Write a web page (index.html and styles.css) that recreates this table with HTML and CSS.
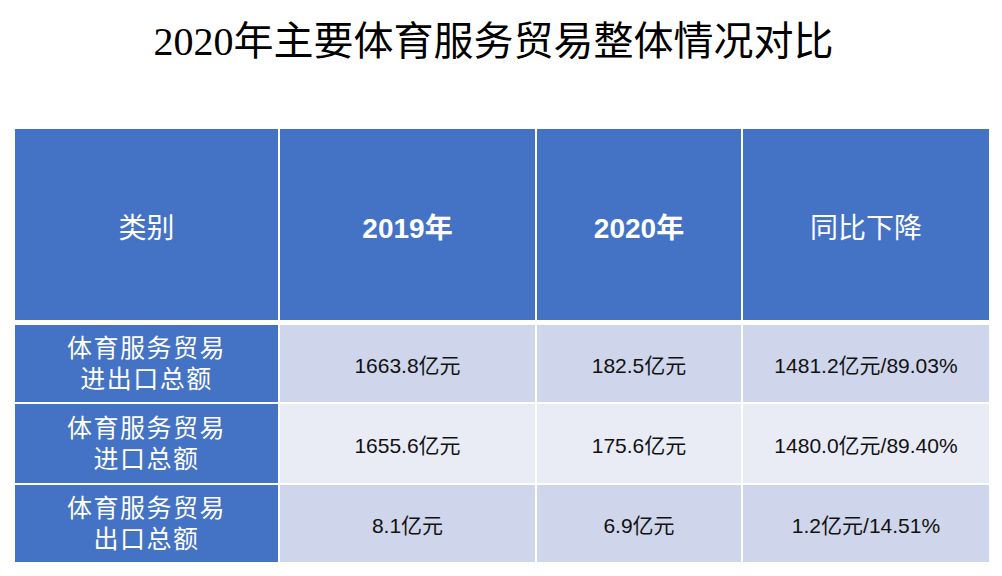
FILE: index.html
```html
<!DOCTYPE html>
<html lang="zh-CN">
<head>
<meta charset="utf-8">
<title>2020年主要体育服务贸易整体情况对比</title>
<link rel="stylesheet" href="styles.css">
</head>
<body>
<div class="page">
  <h1 class="title">2020年主要体育服务贸易整体情况对比</h1>
  <div class="table">
    <div class="row head">
      <div class="cell">类别</div>
      <div class="cell bold">2019年</div>
      <div class="cell bold">2020年</div>
      <div class="cell">同比下降</div>
    </div>
    <div class="row body odd">
      <div class="cell label">体育服务贸易<br>进出口总额</div>
      <div class="cell">1663.8亿元</div>
      <div class="cell">182.5亿元</div>
      <div class="cell">1481.2亿元/89.03%</div>
    </div>
    <div class="row body even tall">
      <div class="cell label">体育服务贸易<br>进口总额</div>
      <div class="cell">1655.6亿元</div>
      <div class="cell">175.6亿元</div>
      <div class="cell">1480.0亿元/89.40%</div>
    </div>
    <div class="row body odd">
      <div class="cell label">体育服务贸易<br>出口总额</div>
      <div class="cell">8.1亿元</div>
      <div class="cell">6.9亿元</div>
      <div class="cell">1.2亿元/14.51%</div>
    </div>
  </div>
</div>
</body>
</html>
```

FILE: styles.css
```css
html, body {
  margin: 0;
  padding: 0;
  background: #ffffff;
}

.page {
  width: 1002px;
  height: 576px;
  padding-top: 22px;
  box-sizing: border-box;
}

.title {
  margin: 0;
  padding-right: 15px;
  font-family: "Liberation Serif", "Noto Sans CJK SC", serif;
  font-weight: normal;
  font-size: 40px;
  line-height: 40px;
  text-align: center;
  color: #000000;
}

.table {
  margin: 67px 0 0 15px;
  width: 974px;
  display: flex;
  flex-direction: column;
  gap: 2px;
}

.row {
  display: grid;
  grid-template-columns: 263px 255px 204px 246px;
  column-gap: 2px;
}

.cell {
  display: flex;
  align-items: center;
  justify-content: center;
  text-align: center;
}

.head {
  height: 191px;
  margin-bottom: 3px;
}

.head .cell {
  background: #4472c4;
  color: #ffffff;
  font-family: "Liberation Sans", "Noto Sans CJK SC", sans-serif;
  font-size: 28px;
  padding-top: 2px;
}

.head .bold {
  font-weight: bold;
}

.body {
  height: 77px;
}

.body.tall {
  height: 79px;
}

.body .cell {
  font-family: "Liberation Sans", "Noto Sans CJK SC", sans-serif;
  font-size: 21px;
  color: #111111;
}

.odd .cell {
  background: #cfd5ea;
}

.even .cell {
  background: #e9ebf5;
}

.body .cell.label {
  background: #4472c4;
  color: #ffffff;
  font-family: "Liberation Sans", "Noto Sans CJK SC", sans-serif;
  font-size: 25px;
  line-height: 31px;
  letter-spacing: 1.5px;
}
```
